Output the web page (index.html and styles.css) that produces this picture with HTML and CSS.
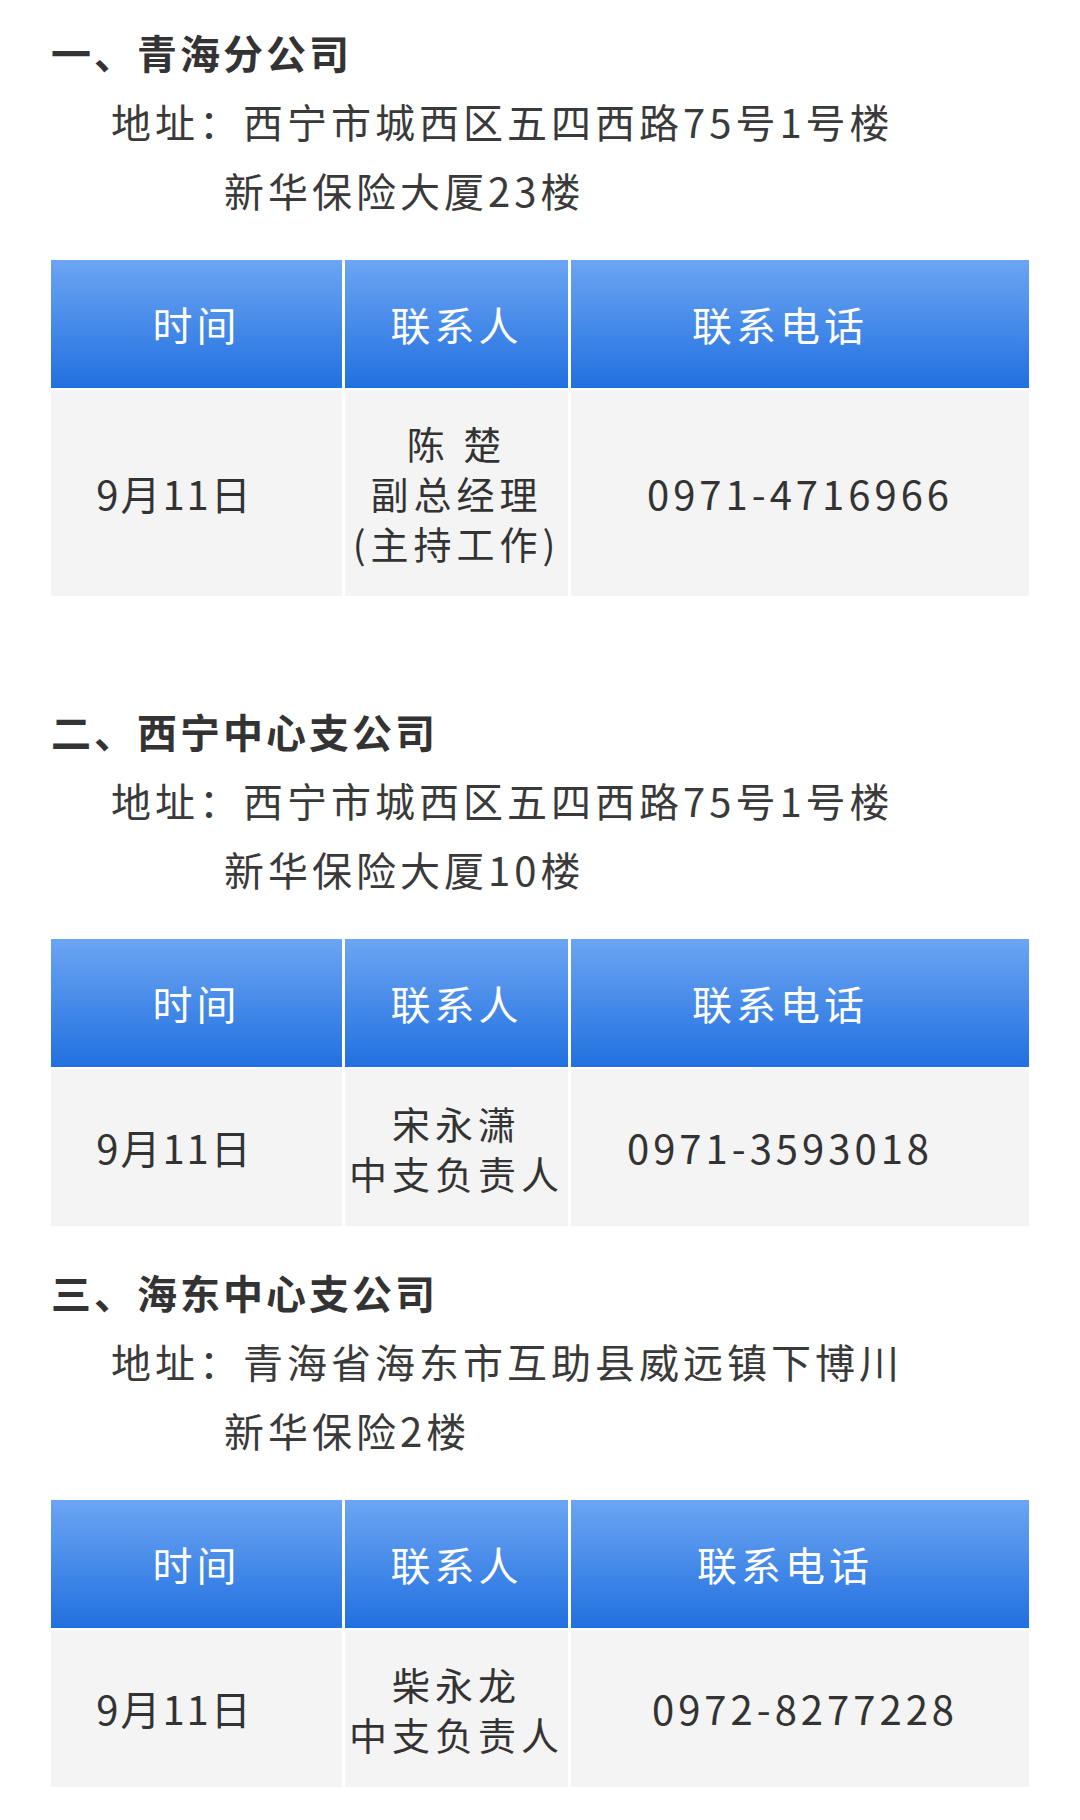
FILE: index.html
```html
<!DOCTYPE html>
<html lang="zh-CN">
<head>
    <meta charset="UTF-8" />
    <meta name="viewport" content="width=device-width, initial-scale=1.0"/>
    <title>联系方式</title>
    <link rel="stylesheet" href="styles.css">
</head>
<body>
    <div class="page">
        <section class="branch">
            <h2 class="branch-title">一、青海分公司</h2>
            <p class="addr">地址：西宁市城西区五四西路75号1号楼</p>
            <p class="addr addr-cont">新华保险大厦23楼</p>
            <div class="contact tall">
                <div class="cell head">时间</div>
                <div class="cell head">联系人</div>
                <div class="cell head shift-l">联系电话</div>
                <div class="cell date">9月11日</div>
                <div class="cell person">陈 楚<br>副总经理<br>(主持工作)</div>
                <div class="cell phone">0971-4716966</div>
            </div>
            <p class="blank">&nbsp;</p>
        </section>

        <section class="branch">
            <h2 class="branch-title">二、西宁中心支公司</h2>
            <p class="addr">地址：西宁市城西区五四西路75号1号楼</p>
            <p class="addr addr-cont">新华保险大厦10楼</p>
            <div class="contact">
                <div class="cell head">时间</div>
                <div class="cell head">联系人</div>
                <div class="cell head shift-l">联系电话</div>
                <div class="cell date">9月11日</div>
                <div class="cell person">宋永潇<br>中支负责人</div>
                <div class="cell phone shift-l">0971-3593018</div>
            </div>
        </section>

        <section class="branch">
            <h2 class="branch-title">三、海东中心支公司</h2>
            <p class="addr">地址：青海省海东市互助县威远镇下博川</p>
            <p class="addr addr-cont">新华保险2楼</p>
            <div class="contact">
                <div class="cell head">时间</div>
                <div class="cell head">联系人</div>
                <div class="cell head shift-s">联系电话</div>
                <div class="cell date">9月11日</div>
                <div class="cell person">柴永龙<br>中支负责人</div>
                <div class="cell phone shift-r">0972-8277228</div>
            </div>
        </section>
    </div>
</body>
</html>
```

FILE: styles.css
```css
body {
    margin: 0;
    background-color: #ffffff;
    color: #333333;
    font-family: "Noto Sans CJK SC", "Noto Sans", sans-serif;
}
.page {
    padding: 18px 51px 0 51px;
}
.branch {
    margin-bottom: 32px;
}
.branch-title {
    margin: 0;
    font-size: 40px;
    font-weight: 700;
    line-height: 69px;
    letter-spacing: 3px;
    color: #333333;
}
.addr {
    margin: 0;
    padding-left: 60px;
    font-size: 40px;
    line-height: 69px;
    letter-spacing: 4px;
    color: #3a3a3a;
}
.addr-cont {
    padding-left: 173px;
}
.blank {
    margin: 0;
    line-height: 69px;
    height: 69px;
}
.contact {
    margin-top: 35px;
    display: grid;
    grid-template-columns: 291px 223px 1fr;
    grid-template-rows: 128px 157px;
    column-gap: 3px;
    row-gap: 2px;
}
.contact.tall {
    grid-template-rows: 128px 206px;
}
.cell {
    display: flex;
    align-items: center;
    justify-content: center;
    text-align: center;
    background-color: #f4f4f4;
    font-size: 40px;
    line-height: 49px;
    letter-spacing: 4px;
    color: #333333;
}
.head {
    background: linear-gradient(to bottom, #6ca5f2, #2170e0);
    color: #ffffff;
}
.person {
    font-size: 38px;
    line-height: 50px;
    letter-spacing: 5px;
}
.date {
    padding-right: 44px;
    letter-spacing: 2px;
}
.shift-l {
    padding-right: 40px;
}
.shift-s {
    padding-right: 30px;
}
.shift-r {
    padding-left: 10px;
}
```
